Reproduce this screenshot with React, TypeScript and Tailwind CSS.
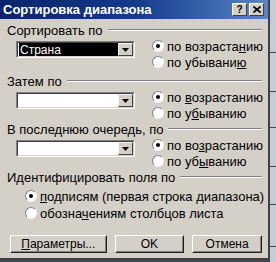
import type { ReactNode } from 'react'

const FONT = "font-['Liberation_Sans',Arial,sans-serif]"

function Radio({ checked }: { checked?: boolean }) {
  return (
    <span className="flex h-[12px] w-[12px] shrink-0 items-center justify-center rounded-full border border-t-[#808080] border-l-[#808080] border-r-[#f4f4f4] border-b-[#f4f4f4] bg-white">
      {checked && <span className="h-[4px] w-[4px] rounded-full bg-black" />}
    </span>
  )
}

function RadioRow({ checked, children }: { checked?: boolean; children: ReactNode }) {
  return (
    <div className="flex h-[16px] items-center gap-[3px]">
      <Radio checked={checked} />
      <span className="whitespace-nowrap leading-none">{children}</span>
    </div>
  )
}

function Combo({ value }: { value?: string }) {
  return (
    <div className="h-[17px] w-[119px] border border-t-[#808080] border-l-[#808080] border-r-white border-b-white">
      <div className="flex h-full border border-t-[#404040] border-l-[#404040] border-r-[#d4d0c8] border-b-[#d4d0c8] bg-white">
        <div className="flex flex-1 items-center pl-[1px]">
          {value && <span className="flex h-full flex-1 items-center bg-black pl-[1px] text-[12px] leading-none text-white">{value}</span>}
        </div>
        <div className="flex w-[15px] items-center justify-center border border-t-[#f4f4f4] border-l-[#f4f4f4] border-r-[#404040] border-b-[#404040] bg-[#d4d0c8]">
          <svg width="7" height="4" viewBox="0 0 7 4">
            <path d="M0 0h7L3.5 4z" fill="#000" />
          </svg>
        </div>
      </div>
    </div>
  )
}

function GroupLabel({ children }: { children: ReactNode }) {
  return (
    <div className="flex h-[14px] items-center gap-[5px]">
      <span className="whitespace-nowrap leading-none">{children}</span>
      <div className="h-[2px] flex-1 border-t border-b border-t-[#808080] border-b-white" />
    </div>
  )
}

function SortSection({ label, value, asc, desc, className }: { label: string; value?: string; asc: ReactNode; desc: ReactNode; className: string }) {
  return (
    <div className={className}>
      <GroupLabel>{label}</GroupLabel>
      <div className="mt-[1px] flex">
        <div className="ml-[9px] mt-[3px]">
          <Combo value={value} />
        </div>
        <div className="ml-[17px]">
          <RadioRow checked>{asc}</RadioRow>
          <RadioRow>{desc}</RadioRow>
        </div>
      </div>
    </div>
  )
}

function Button({ children, className }: { children: ReactNode; className: string }) {
  return (
    <div className={`h-[18px] border border-t-white border-l-white border-r-[#202020] border-b-[#202020] text-[12px] ${className}`}>
      <div className="flex h-full items-center justify-center border border-t-[#d4d0c8] border-l-[#d4d0c8] border-r-[#808080] border-b-[#808080] leading-none">
        {children}
      </div>
    </div>
  )
}

export default function App() {
  return (
    <div className={`flex h-[262px] w-[276px] bg-[#3c4658] text-[13px] text-black ${FONT}`}>
      <div className="flex h-[260px] w-[270px] shrink-0 flex-col border-r-2 border-b-2 border-r-[#404040] border-b-[#404040] bg-[#d4d0c8]">
        <div className="flex h-[19px] items-center bg-gradient-to-r from-[#0a246a] via-[#143a8a] to-[#5a86c4] pl-[3px] pr-[4px]">
          <span className="flex-1 text-[13px] font-bold leading-none text-white">Сортировка диапазона</span>
          <div className="flex gap-[2px]">
            <div className="flex h-[13px] w-[15px] items-center justify-center border border-t-white border-l-white border-r-[#404040] border-b-[#404040] bg-[#d4d0c8] text-[10px] font-bold leading-none">?</div>
            <div className="flex h-[13px] w-[15px] items-center justify-center border border-t-white border-l-white border-r-[#404040] border-b-[#404040] bg-[#d4d0c8]">
              <svg width="8" height="7" viewBox="0 0 8 7">
                <path d="M0.5 0.5l7 6M7.5 0.5l-7 6" stroke="#000" strokeWidth="1.6" />
              </svg>
            </div>
          </div>
        </div>

        <div className="flex flex-1 flex-col pl-[7px] pr-[6px] pt-[4px]">
          <SortSection
            className=""
            label="Сортировать по"
            value="Страна"
            asc={<>по возраста<u>н</u>ию</>}
            desc={<>по убывани<u>ю</u></>}
          />
          <SortSection
            className="mt-[4px]"
            label="Затем по"
            asc={<>по <u>в</u>озрастанию</>}
            desc={<>по у<u>б</u>ыванию</>}
          />
          <SortSection
            className="mt-[1px]"
            label="В последнюю очередь, по"
            asc={<>по во<u>з</u>растанию</>}
            desc={<>по уб<u>ы</u>ванию</>}
          />
          <div className="mt-[1px]">
            <GroupLabel>Идентифицировать поля по</GroupLabel>
            <div className="ml-[18px] mt-[4px] flex flex-col gap-[1px]">
              <RadioRow checked><u>п</u>одписям (первая строка диапазона)</RadioRow>
              <RadioRow>обозна<u>ч</u>ениям столбцов листа</RadioRow>
            </div>
          </div>
          <div className="ml-[3px] mt-[14px] flex gap-[8px]">
            <Button className="w-[97px]"><u>П</u>араметры...</Button>
            <Button className="w-[70px]">OK</Button>
            <Button className="w-[70px]">Отмена</Button>
          </div>
        </div>
      </div>
      <div className="flex flex-1 flex-col bg-[#c4ccd8]">
        <div className="h-[53px] border-b border-[#404850]" />
        <div className="h-[39px] border-b border-[#404850]" />
        <div className="h-[36px] border-b border-[#404850]" />
        <div className="h-[39px] border-b border-[#404850]" />
        <div className="h-[38px] border-b border-[#404850]" />
        <div className="h-[42px] border-b border-[#404850]" />
      </div>
    </div>
  )
}
